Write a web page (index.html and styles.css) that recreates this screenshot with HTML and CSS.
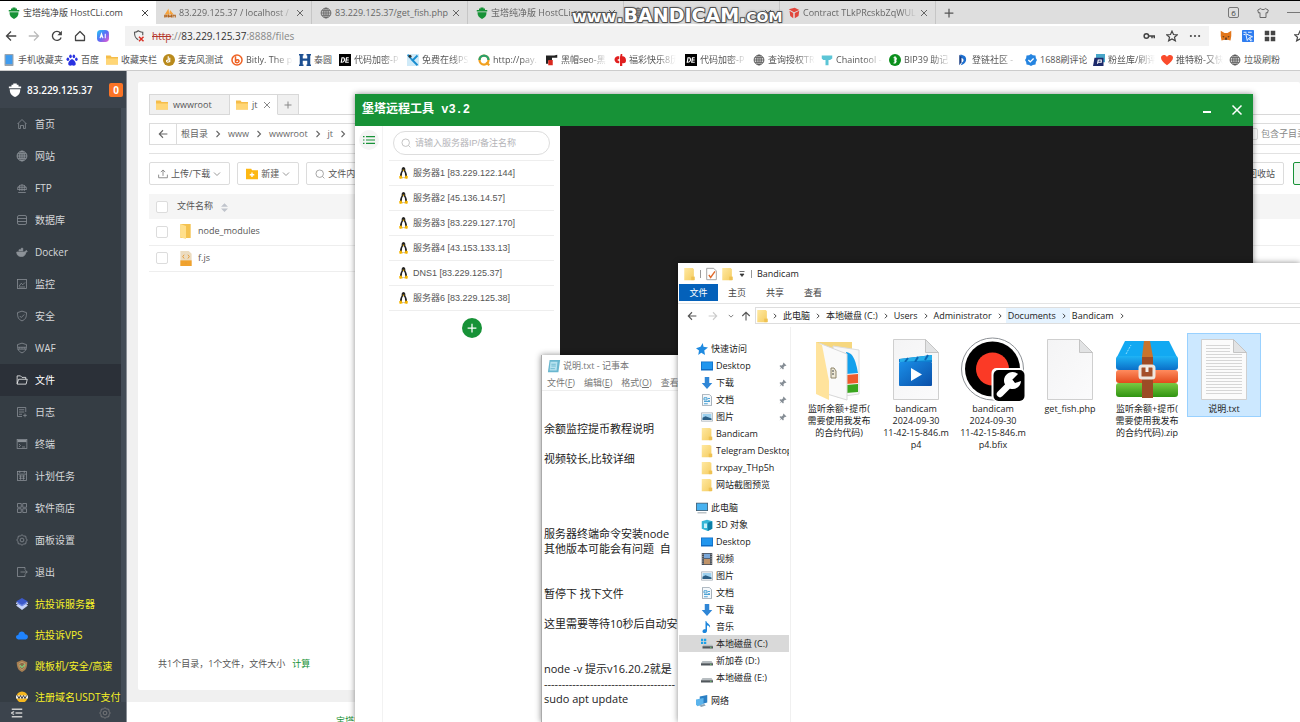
FILE: index.html
```html
<!DOCTYPE html>
<html lang="zh-CN">
<head>
	<meta charset="UTF-8">
	<title>宝塔纯净版 HostCLi.com</title>
	<link rel="stylesheet" href="styles.css">
</head>
<body>

<!-- icons -->
<svg class="defs" width="0" height="0">
	<defs>
		<linearGradient id="gFolder" x1="0" y1="0" x2="1" y2="1"><stop offset="0" stop-color="#ffe9a2"/><stop offset="1" stop-color="#f5cd62"/></linearGradient>
		<linearGradient id="gAi" x1="0" y1="0" x2="1" y2="1"><stop offset="0" stop-color="#22c8f5"/><stop offset=".5" stop-color="#5a6cf5"/><stop offset="1" stop-color="#f05ad0"/></linearGradient>
		<linearGradient id="gBlue" x1="0" y1="0" x2="0" y2="1"><stop offset="0" stop-color="#1fb4f5"/><stop offset="1" stop-color="#0a6fc8"/></linearGradient>
		<linearGradient id="gPlay" x1="0" y1="0" x2="1" y2="1"><stop offset="0" stop-color="#1a8fe8"/><stop offset="1" stop-color="#0a4fa8"/></linearGradient>
		<linearGradient id="gRed" x1="0" y1="0" x2="0" y2="1"><stop offset="0" stop-color="#ff8b5e"/><stop offset="1" stop-color="#e24a1c"/></linearGradient>
		<linearGradient id="gGreen" x1="0" y1="0" x2="0" y2="1"><stop offset="0" stop-color="#7ac943"/><stop offset="1" stop-color="#2f9412"/></linearGradient>
		<linearGradient id="gPaper" x1="0" y1="0" x2="1" y2="1"><stop offset="0" stop-color="#f4f4f5"/><stop offset="1" stop-color="#fbfbfc"/></linearGradient>
	</defs>
	<symbol id="bt" viewBox="0 0 16 16"><path d="M1 4h3V2h2V.500h4V2h2v2h3v2H1z"/><path d="M2 7h12c0 5-2 7-6 9-4-2-6-4-6-9z"/></symbol>
	<symbol id="pma" viewBox="0 0 16 16"><path d="M1 10 6 2l1 8zM7 10l1-6 5 6z" fill="#f6a23a"/><path d="M1 14v-3h3v2H1M6 14v-3l2 2 2-2v3M12 14v-3h3v3" fill="none" stroke="#b5651d" stroke-width="1.500"/></symbol>
	<symbol id="globe" viewBox="0 0 16 16"><g fill="none" stroke="currentColor" stroke-width="1.300"><circle cx="8" cy="8" r="6.500"/><ellipse cx="8" cy="8" rx="3" ry="6.500"/><path d="M8 1.500v13M1.500 8h13M2.500 5h11M2.500 11h11"/></g></symbol>
	<symbol id="cube" viewBox="0 0 16 16"><path d="M1 3l8-2 6 3-7 3zM2 5l5 3v7l-4-3zM9 8l6-3-1 7-5 3z" fill="#e2463c"/></symbol>
	<symbol id="x" viewBox="0 0 16 16"><path d="M2 2l12 12M14 2L2 14" fill="none" stroke="currentColor" stroke-width="2"/></symbol>
	<symbol id="plus" viewBox="0 0 16 16"><path d="M8 1v14M1 8h14" fill="none" stroke="currentColor" stroke-width="2"/></symbol>
	<symbol id="back" viewBox="0 0 16 16"><path d="M8 2L2 8l6 6M2 8h13" fill="none" stroke="currentColor" stroke-width="1.700"/></symbol>
	<symbol id="fwd" viewBox="0 0 16 16"><path d="M8 2l6 6-6 6M14 8H1" fill="none" stroke="currentColor" stroke-width="1.700"/></symbol>
	<symbol id="up" viewBox="0 0 16 16"><path d="M2 8l6-6 6 6M8 2v13" fill="none" stroke="currentColor" stroke-width="1.700"/></symbol>
	<symbol id="reload" viewBox="0 0 16 16"><path d="M13.500 10A6 6 0 1 1 12.500 4" fill="none" stroke="currentColor" stroke-width="1.800"/><path d="M14.500 1v6h-6z" fill="currentColor"/></symbol>
	<symbol id="home" viewBox="0 0 16 16"><path d="M2 8l6-6 6 6v6H2z" fill="none" stroke="currentColor" stroke-width="1.700" stroke-linejoin="round"/></symbol>
	<symbol id="ai" viewBox="0 0 16 16"><rect width="16" height="16" rx="5" fill="url(#gAi)"/><path d="M4 11l2-6 2 6M5 9h2.500M11 5v6" fill="none" stroke="#fff" stroke-width="1.400"/></symbol>
	<symbol id="unsafe" viewBox="0 0 16 16"><path d="M7 13C3 11 2 9 2 3c3 0 4-1 5-2 2 1 3 2 6 2v4" fill="none" stroke="#555" stroke-width="1.500"/><path d="M8 9l6 6M14 9l-6 6" stroke="#d93025" stroke-width="2"/></symbol>
	<symbol id="key" viewBox="0 0 16 16"><circle cx="4.500" cy="8" r="3" fill="none" stroke="#444" stroke-width="2"/><path d="M8 8h7v3M12 8v3" fill="none" stroke="#444" stroke-width="2"/></symbol>
	<symbol id="star" viewBox="0 0 16 16"><path d="M8 1.500l2 4.500 5 .500-3.700 3.200 1.200 4.800L8 12l-4.500 2.500 1.200-4.800L1 6.500 6 6z" fill="none" stroke="#444" stroke-width="1.600"/></symbol>
	<symbol id="dots" viewBox="0 0 16 16"><g fill="#444"><circle cx="2.500" cy="8" r="1.400"/><circle cx="8" cy="8" r="1.400"/><circle cx="13.500" cy="8" r="1.400"/></g></symbol>
	<symbol id="fox" viewBox="0 0 16 16"><path d="M1 1l5 3h4l5-3v7l-1 6-4-1H6l-4 1-1-6z" fill="#e2761b"/><path d="M6 13l2-4 2 4z" fill="#5a3a24"/><path d="M3 8l3 1-1 1zM13 8l-3 1 1 1z" fill="#222"/></symbol>
	<symbol id="sel" viewBox="0 0 16 16"><rect width="16" height="16" rx="1" fill="#2f7df0"/><path d="M5 5l9 4-4 1 3 4-1 1-3-4-2 3zM2 3h4M2 6h2M8 3h5" fill="none" stroke="#fff" stroke-width="1.200"/></symbol>
	<symbol id="apps" viewBox="0 0 16 16"><path d="M1 1h6v6H1zM9 1h6v6H9zM1 9h6v6H1zM9 9h6v6H9z" fill="#444"/></symbol>
	<symbol id="shirt" viewBox="0 0 16 16"><path d="M5 2l-4 2 1 4 2-.500V14h8V7.500l2 .500 1-4-4-2c-1 2-5 2-6 0z" fill="none" stroke="#666" stroke-width="1.300"/></symbol>
	<!-- bookmarks -->
	<symbol id="phone" viewBox="0 0 16 16"><rect x="2" y="0" width="12" height="16" rx="1" fill="#9aa4ae"/><rect x="3.500" y="1.500" width="9" height="12" fill="#3f9cf0"/></symbol>
	<symbol id="paw" viewBox="0 0 16 16"><g fill="#2932e1"><ellipse cx="2.500" cy="7" rx="1.800" ry="2.200"/><ellipse cx="6" cy="3" rx="1.700" ry="2.500"/><ellipse cx="10.500" cy="3" rx="1.700" ry="2.500"/><ellipse cx="13.800" cy="7" rx="1.700" ry="2.200"/><path d="M8 7c2 0 5 3.500 5 6 0 3-3 3-5 2-2 1-5 1-5-2 0-2.500 3-6 5-6z"/></g></symbol>
	<symbol id="folder" viewBox="0 0 16 16"><path d="M0 2h6l1.500 2H16v10H0z" fill="#f5bd4a"/><path d="M0 6h16v8H0z" fill="#ffd676"/></symbol>
	<symbol id="coin" viewBox="0 0 16 16"><circle cx="8" cy="8" r="8" fill="#b98a1c"/><path d="M7 3v5c-3 0-3 2-1 3l3-1V5" fill="none" stroke="#fff" stroke-width="1.500"/></symbol>
	<symbol id="bitly" viewBox="0 0 16 16"><circle cx="8" cy="8" r="6.700" fill="none" stroke="#ee6123" stroke-width="2"/><path d="M6 3v8c3 2 6-1 4-3-2-1-3 0-4 2" fill="none" stroke="#ee6123" stroke-width="2"/></symbol>
	<symbol id="hh" viewBox="0 0 16 16"><path d="M0 0h6v2H5v4h6V2h-1V0h6v2h-1v12h1v2h-6v-2h1V9H5v5h1v2H0v-2h1V2H0z" fill="#1d4f91"/></symbol>
	<symbol id="de" viewBox="0 0 16 16"><path d="M0 0h16v16H0z"/><path d="M3 11l1-6h2q2 1 1 4-1 2-3 2zM13 5h-3l-1 6h4M10 8h3" fill="none" stroke="#fff" stroke-width="1.600"/></symbol>
	<symbol id="ps" viewBox="0 0 16 16"><path d="M0 0h16v16H0z" fill="#cfeaf8"/><path d="M1 1l5 6M6 7l8 8M14 2L8 8" stroke="#1a8ed0" stroke-width="2.500"/><circle cx="4" cy="3" r="2" fill="#333"/></symbol>
	<symbol id="q" viewBox="0 0 16 16"><circle cx="8" cy="8" r="6" fill="none" stroke="#f2a01e" stroke-width="3"/><path d="M2 8a6 6 0 0 1 12 0" fill="none" stroke="#29a06b" stroke-width="3"/><path d="M11 11l4 4" stroke="#f2a01e" stroke-width="3"/></symbol>
	<symbol id="hat" viewBox="0 0 16 16"><path d="M0 2h11l4-1v4H8v4H3v4H0z" fill="#222"/><path d="M3 8h6v7H3z" fill="#d8281e"/></symbol>
	<symbol id="cp" viewBox="0 0 16 16"><path d="M7 3C2 2 0 6 1 9s4 4 6 3V9H5V7h2zM9 0h2v3c4 0 5 3 5 6s-3 4-5 3v4H8V4z" fill="#e01f1f"/></symbol>
	<symbol id="chain" viewBox="0 0 16 16"><path d="M1 2h14v4l-3 2h-2v7H6V8H3L1 6z" fill="#5cc5d6"/></symbol>
	<symbol id="bip" viewBox="0 0 16 16"><circle cx="8" cy="8" r="8" fill="#0b8f1c"/><path d="M8 3v9M6 5h3q2 2-1 3 3 1 0 4H6" fill="none" stroke="#fff" stroke-width="1.500"/></symbol>
	<symbol id="deng" viewBox="0 0 16 16"><path d="M4 1c6 0 9 3 8 8-1 3-3 5-7 6l2-4c3-2 2-5-2-6z" fill="#1c6fd0"/><path d="M3 1l3 3v7l-3 4z" fill="#1a3f86"/></symbol>
	<symbol id="ok" viewBox="0 0 16 16"><path d="M8 0l2.500 1.500L14 2l.500 3.500L16 8l-1.500 2.500L14 14l-3.500.500L8 16l-2.500-1.500L2 14l-.500-3.500L0 8l1.500-2.500L2 2l3.500-.500z" fill="#2584e0"/><path d="M4.500 8l2.500 2.500L11.500 6" fill="none" stroke="#fff" stroke-width="1.800"/></symbol>
	<symbol id="pf" viewBox="0 0 16 16"><path d="M4 0h12v11H4z" fill="#48a6c9"/><path d="M2 5h12v11H0z" fill="#1d2a6b"/><path d="M6 13l1-5h4v3H7" fill="none" stroke="#fff" stroke-width="1.500"/></symbol>
	<symbol id="heart" viewBox="0 0 16 16"><path d="M8 15C3 11 0 8 0 5c0-4 6-5 8-1 2-4 8-3 8 1 0 3-3 6-8 10z" fill="#fa4b2c"/></symbol>
	<!-- panel menu -->
	<symbol id="mHome" viewBox="0 0 16 16"><path d="M2 8l6-6 6 6M3.500 7v7H6v-4h4v4h2.500V7" /></symbol>
	<symbol id="mFtp" viewBox="0 0 16 16"><path d="M2 10a6 6 0 1 1 12 0M8 3v9M2 7h12M2 10h12M5 4v8M11 4v8M3 14h10"/></symbol>
	<symbol id="mDb" viewBox="0 0 16 16"><rect x="2" y="2" width="12" height="12" rx="2"/><path d="M2 6h12M2 10h12"/></symbol>
	<symbol id="mDocker" viewBox="0 0 16 16"><path d="M1 8h10l3-2 1 1-2 2c-1 4-3 5-6 5-4 0-6-2-6-6zM4 7V5h5v2M7 5V3h2v2" fill="currentColor"/></symbol>
	<symbol id="mMon" viewBox="0 0 16 16"><rect x="2" y="2" width="12" height="12"/><path d="M4 11l3-4 2 2 3-3M4 12h8"/></symbol>
	<symbol id="mSafe" viewBox="0 0 16 16"><path d="M8 1.500l6 2c0 6-1 9-6 11-5-2-6-5-6-11zM5 8l2 2 4-4"/></symbol>
	<symbol id="mWaf" viewBox="0 0 16 16"><path d="M8 1.500l6 2c0 6-1 9-6 11-5-2-6-5-6-11zM2 7h12M2 9.500h12M5 7v2M8 7v2M11 7v2"/></symbol>
	<symbol id="mFile" viewBox="0 0 16 16"><path d="M1.500 13V2.500H6l2 2h5V7M1.500 13l2-6H15l-1.500 6.500h-12z"/></symbol>
	<symbol id="mLog" viewBox="0 0 16 16"><path d="M8 14H2V2h11v6M4 5h7M4 8h7M4 11h4M12 10v5M9.500 12.500h5"/></symbol>
	<symbol id="mTerm" viewBox="0 0 16 16"><rect x="1.500" y="2" width="13" height="12"/><path d="M2 4h12" stroke-width="3"/><path d="M4 8l2 2-2 2M8 12h4"/></symbol>
	<symbol id="mCron" viewBox="0 0 16 16"><rect x="2" y="2" width="12" height="12"/><path d="M2 5.500h12M5 1v3M11 1v3M4 8h8M4 11h8M6 7v6M10 7v6"/></symbol>
	<symbol id="mSoft" viewBox="0 0 16 16"><path d="M2 2h5v5H2zM9 2h5v5H9zM2 9h5v5H2zM9 9h5v5H9z"/></symbol>
	<symbol id="mSet" viewBox="0 0 16 16"><path d="M8 1l2 1.500 3 .500.500 3L15 8l-1.500 2-.500 3-3 .500L8 15l-2-1.500-3-.500-.500-3L1 8l1.500-2L3 3l3-.500z"/><circle cx="8" cy="8" r="2.500"/></symbol>
	<symbol id="mExit" viewBox="0 0 16 16"><path d="M12 5V2H2v12h10v-3M6 8h9M12.500 5.500L15 8l-2.500 2.500"/></symbol>
	<symbol id="mServer" viewBox="0 0 16 16"><path d="M8 6l8 4-8 6-8-6z" fill="#c6d2f7" stroke="none"/><path d="M8 3l8 4-8 5-8-5z" fill="#6f8ae6" stroke="#dfe6ff"/><path d="M8 0l8 4.500L8 9 0 4.500z" fill="#3c59c9" stroke="none"/></symbol>
	<symbol id="mCloud" viewBox="0 0 16 16"><path d="M3 14c-4-1-4-6 0-6 1-6 8-6 9-1 5 0 5 6 1 7z" fill="#1f84ff" stroke="none"/></symbol>
	<symbol id="mJump" viewBox="0 0 16 16"><path d="M8 0l7 3c0 7-2 11-7 13C3 14 1 10 1 3z" fill="#a77f52" stroke="none"/><path d="M8 3l4 2c0 4-1 6-4 8-3-2-4-4-4-8z" fill="#8c6a48" stroke="#c7a376"/><path d="M5 7l3 3 4-4" stroke="#7ed07e" stroke-width="1.500"/></symbol>
	<symbol id="mUsdt" viewBox="0 0 16 16"><circle cx="8" cy="8" r="7.500" fill="#f5b71f" stroke="none"/><path d="M0 6h16v4H0z" fill="#eee" stroke="none"/><path d="M2 6l2 4 2-4 2 4 2-4 2 4 2-4" stroke="#444" stroke-width="1.300"/></symbol>
	<symbol id="mFold" viewBox="0 0 16 16"><path d="M1 3h14M6 8h9M4 6L1 8l3 2M1 13h14" stroke-width="2"/></symbol>
	<!-- file manager -->
	<symbol id="chev" viewBox="0 0 8 8"><path d="M2.500 1L5.500 4l-3 3" fill="none" stroke="currentColor" stroke-width="1.100"/></symbol>
	<symbol id="down" viewBox="0 0 8 8"><path d="M1 2.500L4 5.500l3-3" fill="none" stroke="currentColor" stroke-width="1"/></symbol>
	<symbol id="caret" viewBox="0 0 8 8"><path d="M1.500 1.500h5M2 4h4L4 6.500z" fill="#333" stroke="#333" stroke-width=".7"/></symbol>
	<symbol id="upload" viewBox="0 0 16 16"><path d="M1 9v5h14V9M8 11V2M4.500 5L8 1.500 11.500 5" fill="none" stroke="#777" stroke-width="1.300"/></symbol>
	<symbol id="newf" viewBox="0 0 16 16"><path d="M0 1h7l1 2h8v12H0z" fill="#fdb813"/><path d="M8 6v6M5 9h6" stroke="#fff" stroke-width="1.800"/></symbol>
	<symbol id="search" viewBox="0 0 16 16"><circle cx="7.500" cy="7.500" r="6" fill="none" stroke="currentColor" stroke-width="1.400"/><path d="M12 12l3 3" stroke="currentColor" stroke-width="1.400"/></symbol>
	<symbol id="sort" viewBox="0 0 8 12"><path d="M4 1l4 4H0zM0 7h8l-4 4z" fill="#c0c4cc"/></symbol>
	<symbol id="dir" viewBox="0 0 12 16"><path d="M0 0h11v15H0z" fill="#f4c24f"/><path d="M0 0l6 2v14l-6-2z" fill="#ffdf8b"/></symbol>
	<symbol id="jsfile" viewBox="0 0 12 16"><path d="M0 0h9l3 3v13H0z" fill="#ecdcc0"/><path d="M0 10h12v6H0z" fill="#f0a22e"/><path d="M4 4L2.500 6 4 8M8 4l1.500 2L8 8M5 13h2" fill="none" stroke="#e59a38"/></symbol>
	<!-- remote tool -->
	<symbol id="menu" viewBox="0 0 16 12"><path d="M4 1.500h12M4 6h12M4 10.500h12M0 1.500h2M0 6h2M0 10.500h2" stroke="#179237" stroke-width="1.400"/></symbol>
	<symbol id="tux" viewBox="0 0 12 16"><path d="M6 0c2.500 0 2.500 3 2.500 5 2 3 2.500 6 2 9h-9c-.500-3 0-6 2-9 0-2 0-5 2.500-5z" fill="#222"/><path d="M6 5c2 2 2.500 5 2 9H4c-.500-4 0-7 2-9z" fill="#fff"/><path d="M4.500 3.500h3L6 5.500z" fill="#f7b500"/><path d="M0 12.500l3-1.500 2 4-4 1zM12 12.500L9 11l-2 4 4 1z" fill="#f7b500"/></symbol>
	<!-- explorer -->
	<symbol id="wfolder" viewBox="0 0 12 16"><path d="M0 1h10v1h1v13H0z" fill="url(#gFolder)"/><path d="M8 11h4v4H8z" fill="#eec152"/></symbol>
	<symbol id="check" viewBox="0 0 12 16"><path d="M.500 1.500h8l3 3v10H.500z" fill="#fff" stroke="#999"/><path d="M3 9l2 3 5-7" fill="none" stroke="#e06a2c" stroke-width="1.600"/></symbol>
	<symbol id="qstar" viewBox="0 0 16 16"><path d="M9 0l1 5 6 1-5 4 1 6-5-3-4 3 1-6-4-3 6-2z" fill="#1f8ae0"/></symbol>
	<symbol id="desk" viewBox="0 0 16 16"><path d="M0 2h16v12H0z" fill="#0f6cc4"/><path d="M1 3h14v9H1z" fill="#2196ee"/></symbol>
	<symbol id="dl" viewBox="0 0 16 16"><path d="M5 0h6v8h4l-7 8-7-8h4z" fill="#2f86d6"/></symbol>
	<symbol id="doc" viewBox="0 0 16 16"><path d="M2 .500h9l3 3v12H2z" fill="#f4f8fb" stroke="#8b98a4"/><path d="M4 5h4v3H4zM9 6h3M9 9h3M4 10h8M4 13h5" fill="none" stroke="#3c9ad0" stroke-width="1.200"/></symbol>
	<symbol id="pic" viewBox="0 0 16 16"><path d="M.500 2.500h15v11H.500z" fill="#fff" stroke="#9aa4ad"/><path d="M2 4h12v8H2z" fill="#9dd0ee"/><path d="M2 9l4-2 8 3v2H2z" fill="#2c5f85"/></symbol>
	<symbol id="pc" viewBox="0 0 16 16"><path d="M0 1h16v11H0z" fill="#4b5b68"/><path d="M1 2h14v9H1z" fill="#48b2f0"/><path d="M2 14h12v1H2z" fill="#7d8890"/></symbol>
	<symbol id="cube3" viewBox="0 0 16 16"><path d="M1 3l7-2 7 2v10l-6 3-8-3z" fill="#35b6d6"/><path d="M9 5l6-2v10l-6 3z" fill="#0e7fa8"/><path d="M4 6h4v6H4z" fill="#c5f0fa"/></symbol>
	<symbol id="film" viewBox="0 0 16 16"><path d="M1 0h14v16H1z" fill="#454c55"/><path d="M4 1h8v6H4z" fill="#7aa7d8"/><path d="M4 8h8v7H4z" fill="#c09368"/><path d="M2.500 1v14M13.500 1v14" stroke="#ddd" stroke-dasharray="1.500"/></symbol>
	<symbol id="note" viewBox="0 0 16 16"><path d="M7 0c1 4 6 4 5 9-1-3-3-3-4-3v7c0 4-6 4-6 1s3-3 4-3V0z" fill="#1d86dc"/></symbol>
	<symbol id="diskc" viewBox="0 0 16 16"><path d="M0 1h3v3H0zM4 1h3v3H4zM0 5h3v3H0zM4 5h3v3H4z" fill="#1ea1e8"/><path d="M3 9h12l1 2H2z" fill="#b7bdc1"/><path d="M2 11h14v3H2z" fill="#50575c"/><path d="M12 12.500h2" stroke="#6be06b"/></symbol>
	<symbol id="disk" viewBox="0 0 16 16"><path d="M2 8h12l2 3H0z" fill="#b7bdc1"/><path d="M0 11h16v3H0z" fill="#50575c"/><path d="M12 12.500h2" stroke="#6be06b"/></symbol>
	<symbol id="net" viewBox="0 0 16 16"><path d="M5 2l10-2v10l-10 3z" fill="#2b7fc4"/><path d="M0 6l10-2v8l-8 3-2-2z" fill="#5cb4ec"/><path d="M4 14l7-2 2 2-6 2z" fill="#8aa6ba"/></symbol>
	<symbol id="pin" viewBox="0 0 16 16"><path d="M9 1l6 6-2 1-1-.500-3 3 .500 3L8 15l-3-3-4 3 3-4-3-3 1.500-1.500 3 .500 3-3L8 3z" fill="#858d95"/></symbol>
	<symbol id="npad" viewBox="0 0 16 16"><path d="M3 1h12l-2 14H1z" fill="#6ab7cf"/><path d="M4 3h8l-1 10H3z" fill="#b5e2ef"/><path d="M5 6h5M5 8h5M4 11h5" stroke="#6ab7cf"/></symbol>
	<symbol id="bigFolder" viewBox="0 0 64 64"><path d="M9 5h36v50H9z" fill="#f6d77f"/><path d="M26 9l26 4v44l-22 3z" fill="#f7f7f7" stroke="#dcdcdc"/><path d="M39 15c6 1 9 5 12 21l-12 1z" fill="#13a0ec"/><path d="M39 38l12-1v9l-12 1z" fill="#ee5a2c"/><path d="M39 48l12-1v8l-12 1z" fill="#3aa61e"/><path d="M12 6l28 11v46L20 57z" fill="#fafafa" stroke="#d8d8d8"/><path d="M9 5l6 3 7 36v19L9 57z" fill="#ffe39c"/><path d="M24 31h3l2 3v7h-5z" fill="#efead9" stroke="#8c8368"/><path d="M25 34h2M25 37h2" stroke="#444"/></symbol>
	<symbol id="video" viewBox="0 0 64 64"><path d="M9.500 2.500h32l13 13v47h-45z" fill="url(#gPaper)" stroke="#cfcfcf"/><path d="M41.500 2.500v13h13z" fill="#e2e3e4" stroke="#c4c4c4"/><path d="M15 22l33-4v7H15z" fill="#0e7fd0"/><path d="M16 22l32-4v5l-32 2z" fill="#27aeea"/><path d="M24 21l-3 4M34 20l-3 5M44 18l-3 5" stroke="#0b66b4" stroke-width="2"/><rect x="15" y="25" width="33" height="24" rx="1" fill="url(#gPlay)"/><path d="M27 31v13l11-6.500z" fill="#fff"/></symbol>
	<symbol id="rec" viewBox="0 0 64 64"><circle cx="31.500" cy="32" r="31" fill="#fff" stroke="#8d9196"/><circle cx="31.500" cy="32" r="27.500"/><circle cx="31.500" cy="32" r="16.500" fill="#fb3a26"/><rect x="30.500" y="31" width="33" height="33" rx="5" fill="#fff"/><rect x="32.500" y="33" width="31" height="31" rx="5"/><path d="M39 57l11-11" stroke="#fff" stroke-width="6.500" stroke-linecap="round"/><path d="M57 37a8.500 8.500 0 1 0 3 7l-6 2-3-3z" fill="#fff"/></symbol>
	<symbol id="paper" viewBox="0 0 64 64"><path d="M9.500 2.500h32l13 13v47h-45z" fill="url(#gPaper)" stroke="#cfcfcf"/><path d="M41.500 2.500v13h13z" fill="#e2e3e4" stroke="#c4c4c4"/></symbol>
	<symbol id="zip" viewBox="0 0 64 64"><path d="M10 4h44l8 16H2z" fill="#12a9f2"/><rect x="1" y="19" width="62" height="14" rx="3" fill="url(#gBlue)"/><rect x="1" y="33" width="62" height="13" rx="3" fill="url(#gRed)"/><rect x="1" y="46" width="62" height="14" rx="3" fill="url(#gGreen)"/><path d="M29 4h6l3 16H27z" fill="#c9742c"/><path d="M27 20h11v41H27z" fill="#9c4c26"/><path d="M11 17l5-9" stroke="#8fe0ff" stroke-dasharray="2 1"/><rect x="25" y="29" width="14" height="12" rx="2" fill="#a4502a" stroke="#eee7e0" stroke-width="3"/><path d="M32 30v5" stroke="#f2eee9" stroke-width="3"/></symbol>
	<symbol id="txt" viewBox="0 0 64 64"><path d="M9.500 2.500h32l13 13v47h-45z" fill="#fbfbfb" stroke="#cfcfcf"/><path d="M14 8.500h24M14 11.500h24M14 14.500h24M14 17.500h36M14 20.500h36M14 23.500h36M14 26.500h36M14 29.500h36M14 32.500h36M14 35.500h36M14 38.500h36M14 41.500h36M14 44.500h36M14 47.500h36M14 50.500h36M14 53.500h36M14 56.500h36" stroke="#d6d6d6"/><path d="M41.500 2.500v13h13z" fill="#e2e3e4" stroke="#c4c4c4"/></symbol>
</svg>

<div class="browser">
	<div class="tabs">
		<div class="tab on"><svg class="i12 green"><use href="#bt"/></svg><span>宝塔纯净版 HostCLi.com</span><button aria-label="关闭"><svg class="i8"><use href="#x"/></svg></button></div>
		<div class="tab"><svg class="i12"><use href="#pma"/></svg><span>83.229.125.37 / localhost /</span><button aria-label="关闭"><svg class="i8"><use href="#x"/></svg></button></div>
		<div class="tab"><svg class="i12"><use href="#globe"/></svg><span class="full">83.229.125.37/get_fish.php</span><button aria-label="关闭"><svg class="i8"><use href="#x"/></svg></button></div>
		<div class="tab"><svg class="i12 green"><use href="#bt"/></svg><span>宝塔纯净版 HostCLi.com</span><button aria-label="关闭"><svg class="i8"><use href="#x"/></svg></button></div>
		<div class="tab"><svg class="i12"><use href="#globe"/></svg><span></span><button aria-label="关闭"><svg class="i8"><use href="#x"/></svg></button></div>
		<div class="tab"><svg class="i12"><use href="#cube"/></svg><span>Contract TLkPRcskbZqWUL</span><button aria-label="关闭"><svg class="i8"><use href="#x"/></svg></button></div>
		<button class="newTab" aria-label="新标签页"><svg class="i10"><use href="#plus"/></svg></button>
		<div class="winBtns">
			<span class="count">6</span>
			<svg class="i12"><use href="#shirt"/></svg>
			<button class="min" aria-label="最小化"></button>
		</div>
	</div>

	<div class="bar">
		<button aria-label="后退"><svg class="i12"><use href="#back"/></svg></button>
		<button class="off" aria-label="前进"><svg class="i12"><use href="#fwd"/></svg></button>
		<button aria-label="刷新"><svg class="i12"><use href="#reload"/></svg></button>
		<button aria-label="主页"><svg class="i12"><use href="#home"/></svg></button>
		<button aria-label="AI"><svg class="i12"><use href="#ai"/></svg></button>
		<div class="url">
			<svg class="i12"><use href="#unsafe"/></svg>
			<p><del>http</del>://<b>83.229.125.37</b>:8888/files</p>
			<svg class="i12"><use href="#key"/></svg>
			<svg class="i12"><use href="#star"/></svg>
			<svg class="i12"><use href="#dots"/></svg>
		</div>
		<div class="ext">
			<svg class="i12"><use href="#fox"/></svg>
			<svg class="i12"><use href="#sel"/></svg>
			<svg class="i12"><use href="#apps"/></svg>
			<svg class="i12 cut"><use href="#star"/></svg>
		</div>
	</div>

	<nav class="marks">
		<a href="#" class="w63"><svg class="i12"><use href="#phone"/></svg><span>手机收藏夹</span></a>
		<a href="#" class="w40"><svg class="i12"><use href="#paw"/></svg><span>百度</span></a>
		<a href="#" class="w57"><svg class="i12"><use href="#folder"/></svg><span>收藏夹栏</span></a>
		<a href="#"><svg class="i12"><use href="#coin"/></svg><span>麦克风测试</span></a>
		<a href="#"><svg class="i12"><use href="#bitly"/></svg><span class="fade">Bitly. The p</span></a>
		<a href="#" class="w40"><svg class="i12"><use href="#hh"/></svg><span>泰圆</span></a>
		<a href="#"><svg class="i12"><use href="#de"/></svg><span class="fade">代码加密-P</span></a>
		<a href="#" class="w71"><svg class="i12"><use href="#ps"/></svg><span class="fade">免费在线PS_</span></a>
		<a href="#"><svg class="i12"><use href="#q"/></svg><span class="fade">http://pay.</span></a>
		<a href="#"><svg class="i12"><use href="#hat"/></svg><span class="fade">黑帽seo-黑</span></a>
		<a href="#" class="w71"><svg class="i12"><use href="#cp"/></svg><span class="fade">福彩快乐8历</span></a>
		<a href="#"><svg class="i12"><use href="#de"/></svg><span class="fade">代码加密-P</span></a>
		<a href="#"><svg class="i12"><use href="#globe"/></svg><span class="fade">查询授权TR</span></a>
		<a href="#"><svg class="i12"><use href="#chain"/></svg><span class="fade">Chaintool -</span></a>
		<a href="#"><svg class="i12"><use href="#bip"/></svg><span class="fade">BIP39 助记</span></a>
		<a href="#"><svg class="i12"><use href="#deng"/></svg><span class="fade">登链社区 -</span></a>
		<a href="#"><svg class="i12"><use href="#ok"/></svg><span>1688刷评论</span></a>
		<a href="#"><svg class="i12"><use href="#pf"/></svg><span class="fade">粉丝库/刷评</span></a>
		<a href="#"><svg class="i12"><use href="#heart"/></svg><span class="fade">推特粉-又快</span></a>
		<a href="#"><svg class="i12"><use href="#globe"/></svg><span>垃圾刷粉</span></a>
	</nav>

	<div class="panel">
		<aside class="side">
			<div class="host"><svg class="i14"><use href="#bt"/></svg><b>83.229.125.37</b><em>0</em></div>
			<ul class="menu">
				<li><a href="#"><svg class="i12"><use href="#mHome"/></svg>首页</a></li>
				<li><a href="#"><svg class="i12"><use href="#globe"/></svg>网站</a></li>
				<li><a href="#"><svg class="i12"><use href="#mFtp"/></svg>FTP</a></li>
				<li><a href="#"><svg class="i12"><use href="#mDb"/></svg>数据库</a></li>
				<li><a href="#"><svg class="i12"><use href="#mDocker"/></svg>Docker</a></li>
				<li><a href="#"><svg class="i12"><use href="#mMon"/></svg>监控</a></li>
				<li><a href="#"><svg class="i12"><use href="#mSafe"/></svg>安全</a></li>
				<li><a href="#"><svg class="i12"><use href="#mWaf"/></svg>WAF</a></li>
				<li><a href="#" class="on"><svg class="i12"><use href="#mFile"/></svg>文件</a></li>
				<li><a href="#"><svg class="i12"><use href="#mLog"/></svg>日志</a></li>
				<li><a href="#"><svg class="i12"><use href="#mTerm"/></svg>终端</a></li>
				<li><a href="#"><svg class="i12"><use href="#mCron"/></svg>计划任务</a></li>
				<li><a href="#"><svg class="i12"><use href="#mSoft"/></svg>软件商店</a></li>
				<li><a href="#"><svg class="i12"><use href="#mSet"/></svg>面板设置</a></li>
				<li><a href="#"><svg class="i12"><use href="#mExit"/></svg>退出</a></li>
				<li><a href="#" class="ad"><svg class="i12"><use href="#mServer"/></svg>抗投诉服务器</a></li>
				<li><a href="#" class="ad"><svg class="i12"><use href="#mCloud"/></svg>抗投诉VPS</a></li>
				<li><a href="#" class="ad"><svg class="i12"><use href="#mJump"/></svg>跳板机/安全/高速</a></li>
				<li><a href="#" class="ad"><svg class="i12"><use href="#mUsdt"/></svg>注册域名USDT支付</a></li>
			</ul>
			<div class="sideFoot"><svg class="i12"><use href="#mFold"/></svg><svg class="i12 dim"><use href="#mSet"/></svg></div>
		</aside>

		<main class="main">
			<section class="card">
				<div class="ftabs">
					<a href="#" class="ftab"><svg class="i12"><use href="#folder"/></svg>wwwroot</a>
					<a href="#" class="ftab on"><svg class="i12"><use href="#folder"/></svg>jt<svg class="i8"><use href="#x"/></svg></a>
					<button aria-label="新建标签"><svg class="i8"><use href="#plus"/></svg></button>
				</div>
				<div class="path">
					<button aria-label="返回"><svg class="i10"><use href="#back"/></svg></button>
					<a href="#">根目录</a><svg class="i8"><use href="#chev"/></svg>
					<a href="#">www</a><svg class="i8"><use href="#chev"/></svg>
					<a href="#">wwwroot</a><svg class="i8"><use href="#chev"/></svg>
					<a href="#">jt</a><svg class="i8"><use href="#chev"/></svg>
					<label><input type="checkbox">包含子目录</label>
				</div>
				<div class="tools">
					<button><svg class="i10"><use href="#upload"/></svg>上传/下载<svg class="i8"><use href="#down"/></svg></button>
					<button><svg class="i12"><use href="#newf"/></svg>新建<svg class="i8"><use href="#down"/></svg></button>
					<button><svg class="i10"><use href="#search"/></svg>文件内容搜索</button>
					<button class="bin">回收站</button>
					<button class="view" aria-label="列表"></button>
				</div>
				<table class="files">
					<thead>
						<tr><th class="ck"><input type="checkbox" aria-label="全选"></th><th>文件名称<svg class="sort"><use href="#sort"/></svg></th></tr>
					</thead>
					<tbody>
						<tr><td class="ck"><input type="checkbox" aria-label="node_modules"></td><td><svg class="fi"><use href="#dir"/></svg>node_modules</td></tr>
						<tr><td class="ck"><input type="checkbox" aria-label="f.js"></td><td><svg class="fi"><use href="#jsfile"/></svg>f.js</td></tr>
					</tbody>
				</table>
				<p class="sum">共1个目录，1个文件，文件大小<a href="#">计算</a></p>
			</section>
			<footer class="foot"><a href="#">宝塔Linux面板</a></footer>
		</main>
	</div>
</div>

<!-- remote tool -->
<section class="win remote">
	<header><h2>堡塔远程工具 v3.2</h2><button class="min" aria-label="最小化"></button><button aria-label="关闭"><svg class="i14"><use href="#x"/></svg></button></header>
	<div class="rbody">
		<div class="rail"><button aria-label="列表"><svg class="i12"><use href="#menu"/></svg></button></div>
		<div class="servers">
			<label class="find"><svg class="i10"><use href="#search"/></svg><input type="text" placeholder="请输入服务器IP/备注名称" aria-label="搜索"></label>
			<ul>
				<li><svg class="tux"><use href="#tux"/></svg>服务器1 [83.229.122.144]</li>
				<li><svg class="tux"><use href="#tux"/></svg>服务器2 [45.136.14.57]</li>
				<li><svg class="tux"><use href="#tux"/></svg>服务器3 [83.229.127.170]</li>
				<li><svg class="tux"><use href="#tux"/></svg>服务器4 [43.153.133.13]</li>
				<li><svg class="tux"><use href="#tux"/></svg>DNS1 [83.229.125.37]</li>
				<li><svg class="tux"><use href="#tux"/></svg>服务器6 [83.229.125.38]</li>
			</ul>
			<button class="add" aria-label="添加"><svg class="i10"><use href="#plus"/></svg></button>
		</div>
		<div class="term"></div>
	</div>
</section>

<!-- notepad -->
<section class="win notepad">
	<header><svg class="i14"><use href="#npad"/></svg>说明.txt - 记事本</header>
	<nav><a href="#">文件(<u>F</u>)</a><a href="#">编辑(<u>E</u>)</a><a href="#">格式(<u>O</u>)</a><a href="#">查看(<u>V</u>)</a></nav>
	<textarea wrap="off" aria-label="说明.txt">


余额监控提币教程说明

视频较长,比较详细




服务器终端命令安装node
其他版本可能会有问题  自


暂停下 找下文件

这里需要等待10秒后自动安


node -v 提示v16.20.2就是
-------------------------------------
sudo apt update
</textarea>
</section>

<!-- explorer -->
<section class="win explorer">
	<header><svg class="wf"><use href="#wfolder"/></svg><i></i><svg class="wf"><use href="#check"/></svg><svg class="wf"><use href="#wfolder"/></svg><svg class="i8"><use href="#caret"/></svg><i></i><span>Bandicam</span></header>
	<nav class="ribbon"><button class="on">文件</button><button>主页</button><button>共享</button><button>查看</button></nav>
	<div class="addr">
		<button aria-label="后退"><svg class="i10"><use href="#back"/></svg></button>
		<button class="off" aria-label="前进"><svg class="i10"><use href="#fwd"/></svg></button>
		<button class="small" aria-label="历史"><svg class="i6"><use href="#down"/></svg></button>
		<button class="small" aria-label="上移"><svg class="i10"><use href="#up"/></svg></button>
		<div class="crumbs">
			<svg class="wf"><use href="#wfolder"/></svg><svg class="i6 first"><use href="#chev"/></svg>
			<a href="#">此电脑<svg class="i6"><use href="#chev"/></svg></a>
			<a href="#">本地磁盘 (C:)<svg class="i6"><use href="#chev"/></svg></a>
			<a href="#">Users<svg class="i6"><use href="#chev"/></svg></a>
			<a href="#">Administrator<svg class="i6"><use href="#chev"/></svg></a>
			<a href="#" class="on">Documents<svg class="i6"><use href="#chev"/></svg></a>
			<a href="#">Bandicam<svg class="i6"><use href="#chev"/></svg></a>
		</div>
	</div>
	<div class="ebody">
		<ul class="tree">
			<li class="top"><svg class="i12"><use href="#qstar"/></svg><span>快速访问</span></li>
			<li><svg class="i12"><use href="#desk"/></svg><span>Desktop</span><svg class="i8"><use href="#pin"/></svg></li>
			<li><svg class="i12"><use href="#dl"/></svg><span>下载</span><svg class="i8"><use href="#pin"/></svg></li>
			<li><svg class="i12"><use href="#doc"/></svg><span>文档</span><svg class="i8"><use href="#pin"/></svg></li>
			<li><svg class="i12"><use href="#pic"/></svg><span>图片</span><svg class="i8"><use href="#pin"/></svg></li>
			<li><svg class="tf"><use href="#wfolder"/></svg><span>Bandicam</span></li>
			<li><svg class="tf"><use href="#wfolder"/></svg><span>Telegram Desktop</span></li>
			<li><svg class="tf"><use href="#wfolder"/></svg><span>trxpay_THp5h</span></li>
			<li><svg class="tf"><use href="#wfolder"/></svg><span>网站截图预览</span></li>
			<li class="top"><svg class="i12"><use href="#pc"/></svg><span>此电脑</span></li>
			<li><svg class="i12"><use href="#cube3"/></svg><span>3D 对象</span></li>
			<li><svg class="i12"><use href="#desk"/></svg><span>Desktop</span></li>
			<li><svg class="i12"><use href="#film"/></svg><span>视频</span></li>
			<li><svg class="i12"><use href="#pic"/></svg><span>图片</span></li>
			<li><svg class="i12"><use href="#doc"/></svg><span>文档</span></li>
			<li><svg class="i12"><use href="#dl"/></svg><span>下载</span></li>
			<li><svg class="i12"><use href="#note"/></svg><span>音乐</span></li>
			<li class="on"><svg class="i12"><use href="#diskc"/></svg><span>本地磁盘 (C:)</span></li>
			<li><svg class="i12"><use href="#disk"/></svg><span>新加卷 (D:)</span></li>
			<li><svg class="i12"><use href="#disk"/></svg><span>本地磁盘 (E:)</span></li>
			<li class="top"><svg class="i12"><use href="#net"/></svg><span>网络</span></li>
		</ul>
		<ul class="icons">
			<li><svg><use href="#bigFolder"/></svg><p>监听余额+提币(<br>需要使用我发布<br>的合约代码)</p></li>
			<li><svg><use href="#video"/></svg><p>bandicam<br>2024-09-30<br>11-42-15-846.m<br>p4</p></li>
			<li><svg><use href="#rec"/></svg><p>bandicam<br>2024-09-30<br>11-42-15-846.m<br>p4.bfix</p></li>
			<li><svg><use href="#paper"/></svg><p>get_fish.php</p></li>
			<li><svg><use href="#zip"/></svg><p>监听余额+提币(<br>需要使用我发布<br>的合约代码).zip</p></li>
			<li class="on"><svg><use href="#txt"/></svg><p>说明.txt</p></li>
		</ul>
	</div>
</section>

<div class="watermark"><small>www</small>.BANDICAM.<span>COM</span></div>

</body>
</html>
```
FILE: styles.css
```css
* {
	box-sizing: border-box;
}
body,
h2,
p,
ul {
	margin: 0;
	padding: 0;
}
ul {
	list-style: none;
}
a {
	color: inherit;
	text-decoration: none;
}
button {
	margin: 0;
	padding: 0;
	border: 0;
	background: none;
	color: inherit;
	font: inherit;
	display: flex;
	align-items: center;
	justify-content: center;
}
body {
	height: 100vh;
	overflow: hidden;
	position: relative;
	font: 9px/12px "Open Sans", "Noto Sans CJK SC", sans-serif;
	color: #555;
	background: #fff;
}
svg {
	flex: none;
	display: block;
}
.defs {
	position: absolute;
}
.i6 { width: 6px; height: 6px; }
.i8 { width: 8px; height: 8px; }
.i10 { width: 10px; height: 10px; }
.i12 { width: 12px; height: 12px; }
.i14 { width: 14px; height: 14px; }
.green {
	fill: #179237;
}

/* browser */
.browser {
	height: 100%;
	display: flex;
	flex-direction: column;
}
.tabs {
	flex: none;
	height: 24px;
	display: flex;
	background: #dedede;
	border-top: 1px solid #000;
}
.tab {
	flex: 0 1 156px;
	min-width: 0;
	display: flex;
	align-items: center;
	gap: 3px;
	padding: 0 7px 0 8px;
	color: #666;
	border-right: 1px solid #c6c6c6;
}
.tab.on {
	background: #fff;
	border-right: 0;
	color: #444;
}
.tab span {
	flex: 1;
	overflow: hidden;
	white-space: nowrap;
	-webkit-mask: linear-gradient(to right, #000 85%, transparent);
	mask: linear-gradient(to right, #000 85%, transparent);
}
.tab.on span,
.tab .full {
	-webkit-mask: none;
	mask: none;
}
.newTab {
	width: 26px;
}
.winBtns {
	flex: 1;
	display: flex;
	align-items: center;
	justify-content: flex-end;
	gap: 18px;
	color: #444;
}
.count {
	width: 11px;
	height: 11px;
	border: 1px solid #777;
	border-radius: 2px;
	font-size: 8px;
	line-height: 9px;
	text-align: center;
}
.winBtns .min {
	width: 13px;
	height: 1px;
	background: #777;
}
.bar {
	flex: none;
	height: 24px;
	display: flex;
	align-items: center;
	padding-left: 5px;
	gap: 11px;
	color: #444;
}
.bar .off {
	color: #bbb;
}
.url {
	flex: 1;
	height: 20px;
	margin-left: 5px;
	padding: 0 8px;
	display: flex;
	align-items: center;
	gap: 11px;
	background: #f2f2f2;
	font-size: 10px;
	color: #888;
}
.url p {
	flex: 1;
	margin-left: -4px;
}
.url b {
	font-weight: normal;
	color: #333;
}
.url del {
	color: #b5382c;
}
.ext {
	width: 80px;
	display: flex;
	gap: 10px;
	overflow: hidden;
}
.ext .cut {
	margin-left: 8px;
}
.marks {
	flex: none;
	height: 23px;
	display: flex;
	align-items: center;
	padding: 1px 0 0 3px;
	border-bottom: 1px solid #ccc;
	overflow: hidden;
}
.marks a {
	flex: none;
	width: 68px;
	display: flex;
	align-items: center;
	gap: 3px;
}
.marks span {
	width: 47px;
	overflow: hidden;
	white-space: nowrap;
}
.marks .w71 { width: 71px; }
.marks .w63 { width: 63px; }
.marks .w57 { width: 57px; }
.marks .w40 { width: 40px; }
.marks .fade {
	-webkit-mask: linear-gradient(to right, #000 60%, transparent);
	mask: linear-gradient(to right, #000 60%, transparent);
}

/* panel */
.panel {
	flex: 1;
	min-height: 0;
	display: flex;
}
.side {
	flex: none;
	width: 127px;
	display: flex;
	flex-direction: column;
	background: #3c444d;
	border-right: 1px solid #8a8f96;
	color: #d6d8da;
	font-size: 10px;
}
.host {
	flex: none;
	height: 37px;
	display: flex;
	align-items: center;
	gap: 5px;
	padding: 0 3px 0 8px;
	color: #fff;
	fill: #fff;
}
.host b {
	flex: 1;
	font-weight: 600;
}
.host em {
	width: 14px;
	height: 14px;
	border-radius: 2px;
	background: #fb7426;
	font-style: normal;
	font-weight: bold;
	line-height: 14px;
	text-align: center;
}
.menu {
	flex: 1;
	min-height: 0;
	overflow: hidden;
	background: #353d44;
	border-right: 5px solid #434c56;
}
.menu a {
	height: 32px;
	padding-left: 16px;
	display: flex;
	align-items: center;
	gap: 7px;
	white-space: nowrap;
}
.menu svg,
.sideFoot svg {
	fill: none;
	stroke: currentColor;
	color: #8d9399;
}
.menu .on {
	background: #2b3038;
	color: #fff;
}
.menu .on svg {
	color: #fff;
}
.menu .ad {
	height: 31px;
	color: #f8f227;
}
.sideFoot {
	flex: none;
	height: 20px;
	display: flex;
	justify-content: space-between;
	padding: 5px 15px 0 11px;
	overflow: hidden;
}
.sideFoot svg {
	color: #ccc;
}
.sideFoot .dim {
	color: #888;
}
.main {
	flex: 1;
	min-width: 0;
	display: flex;
	flex-direction: column;
	background: #f0f0f0;
}
.card {
	flex: 1;
	margin: 11px 0 12px 11px;
	padding: 12px 0 20px 11px;
	display: flex;
	flex-direction: column;
	overflow: hidden;
	background: #fff;
	border-radius: 2px;
}
.ftabs {
	display: flex;
	height: 21px;
	border-bottom: 1px solid #d8d8d8;
}
.ftabs > * {
	height: 21px;
	display: flex;
	align-items: center;
	gap: 5px;
	padding: 0 6px;
	border: 1px solid #d8d8d8;
	border-left: 0;
	background: #f0f0f0;
}
.ftabs .ftab:first-child {
	width: 81px;
	border-left: 1px solid #d8d8d8;
}
.ftabs .on {
	background: #fff;
	border-bottom-color: #fff;
	gap: 4px;
}
.ftab .i8 {
	margin-left: 2px;
}
.ftabs svg {
	color: #888;
}
.path {
	margin-top: 8px;
	height: 22px;
	display: flex;
	align-items: center;
	gap: 6px;
	border: 1px solid #dcdcdc;
	border-right: 0;
	white-space: nowrap;
	color: #666;
}
.path button {
	width: 27px;
	height: 20px;
	margin-right: -2px;
	border-right: 1px solid #dcdcdc;
}
.path label {
	margin-left: auto;
	margin-right: -6px;
	display: flex;
	align-items: center;
	gap: 3px;
	color: #888;
}
input[type="checkbox"] {
	appearance: none;
	width: 12px;
	height: 12px;
	margin: 0;
	display: block;
	border: 1px solid #dcdcdc;
	border-radius: 2px;
	background: #fff;
}
.tools {
	margin-top: 8px;
	padding-top: 8px;
	border-top: 1px solid #e2e2e2;
	display: flex;
	gap: 7px;
}
.tools button {
	height: 23px;
	padding: 0 8px;
	gap: 3px;
	border: 1px solid #dcdcdc;
	border-radius: 2px;
	white-space: nowrap;
}
.tools button + button {
	padding: 0 8px;
}
.tools svg {
	color: #999;
}
.tools .bin {
	margin-left: auto;
}
.tools .view {
	width: 24px;
	margin: 0 -17px 0 2px;
	border-color: #179237;
	background: #eef7f0;
}
.files {
	margin-top: 9px;
	border-collapse: collapse;
}
.files th {
	height: 25px;
	padding: 0;
	background: #f5f5f5;
	font-weight: normal;
	text-align: left;
}
.files td {
	height: 26px;
	padding: 0;
	border-bottom: 1px solid #eee;
}
.files .ck {
	width: 28px;
	padding-left: 7px;
}
.files svg {
	display: inline-block;
	vertical-align: middle;
}
.sort {
	width: 7px;
	height: 11px;
	margin-left: 8px;
}
.fi {
	width: 12px;
	height: 15px;
	margin: 0 6px 0 3px;
}
.sum {
	margin-top: auto;
	padding-left: 9px;
}
.sum a {
	margin-left: 7px;
	color: #179237;
}
.foot {
	flex: none;
	height: 20px;
	padding: 13px 0 0 209px;
	background: #fff;
	color: #179237;
	overflow: hidden;
}

/* windows */
.win {
	position: absolute;
	bottom: 0;
	display: flex;
	flex-direction: column;
	overflow: hidden;
	background: #fff;
	box-shadow: 0 0 6px rgba(0, 0, 0, .45);
}
.remote {
	left: 355px;
	right: 47px;
	top: 94px;
}
.remote header {
	flex: none;
	height: 32px;
	display: flex;
	align-items: center;
	gap: 20px;
	padding: 0 10px 0 7px;
	background: #179237;
	color: #fff;
}
.remote header svg {
	width: 12px;
	height: 12px;
}
.remote h2 {
	flex: 1;
	font: bold 12px/16px "Liberation Mono", "Noto Sans CJK SC", monospace;
}
.remote .min {
	width: 8px;
	height: 2px;
	margin-top: 4px;
	background: #fff;
}
.rbody {
	flex: 1;
	display: flex;
}
.rail {
	width: 28px;
	padding: 4px;
	border-right: 1px solid #f2f2f2;
}
.rail button {
	width: 20px;
	height: 20px;
	border-radius: 10px;
	background: #f4f4f4;
}
.servers {
	width: 177px;
	padding: 5px 6px;
	font-family: "Liberation Sans", "Noto Sans CJK SC", sans-serif;
}
.find {
	display: flex;
	align-items: center;
	gap: 4px;
	height: 24px;
	margin: 0 4px 5px;
	padding: 0 7px;
	border: 1px solid #ddd;
	border-radius: 12px;
	color: #bbb;
}
.find input {
	flex: 1;
	min-width: 0;
	padding: 0;
	border: 0;
	outline: none;
	font: inherit;
}
.find input::placeholder {
	color: #b4b4b8;
}
.servers ul {
	border-top: 1px solid #eee;
}
.servers li {
	height: 25px;
	display: flex;
	align-items: center;
	gap: 4px;
	padding-left: 9px;
	border-bottom: 1px solid #eee;
	color: #555;
}
.tux {
	width: 11px;
	height: 12px;
}
.add {
	width: 20px;
	height: 20px;
	margin: 7px auto;
	border-radius: 10px;
	background: #179237;
	color: #fff;
}
.term {
	flex: 1;
	background: #1c1c1c;
}

.notepad {
	left: 541px;
	top: 355px;
	width: 300px;
	border-left: 1px solid #aaa;
	color: #777;
}
.notepad header {
	flex: none;
	height: 21px;
	display: flex;
	align-items: center;
	gap: 2px;
	padding-left: 5px;
}
.notepad nav {
	flex: none;
	height: 15px;
	display: flex;
	align-items: center;
	gap: 9px;
	padding-left: 5px;
	border-bottom: 1px solid #eee;
}
.notepad textarea {
	flex: 1;
	margin: 0;
	padding: 0 2px;
	border: 0;
	outline: none;
	resize: none;
	overflow: hidden;
	color: #222;
	font: 11px/15px "Open Sans", "Noto Sans CJK SC", sans-serif;
}

.explorer {
	left: 678px;
	right: 0;
	top: 263px;
	color: #222;
}
.wf {
	width: 11px;
	height: 14px;
}
.explorer header {
	flex: none;
	height: 21px;
	display: flex;
	align-items: center;
	gap: 5px;
	padding-left: 6px;
}
.explorer header i {
	width: 1px;
	height: 8px;
	background: #999;
}
.ribbon {
	flex: none;
	height: 20px;
	display: flex;
	align-items: flex-start;
	padding-left: 1px;
	border-bottom: 1px solid #e4e4e4;
	color: #444;
}
.ribbon button {
	width: 38px;
	height: 17px;
}
.ribbon .on {
	width: 39px;
	background: #0461ba;
	color: #fff;
}
.addr {
	flex: none;
	height: 23px;
	display: flex;
	align-items: center;
	gap: 3px;
	padding-left: 5px;
	color: #555;
}
.addr button {
	width: 18px;
}
.addr .small {
	width: 12px;
}
.addr .off {
	color: #ccc;
}
.crumbs {
	flex: 1;
	height: 17px;
	display: flex;
	align-items: center;
	padding-left: 1px;
	border: 1px solid #ddd;
	border-right: 0;
	color: #222;
	overflow: hidden;
}
.crumbs .first {
	margin: 0 3px 0 4px;
}
.crumbs a {
	height: 15px;
	padding: 0 3px 0 2px;
	display: flex;
	align-items: center;
	gap: 5px;
	white-space: nowrap;
}
.crumbs .on {
	background: #e5f3ff;
}
.ebody {
	flex: 1;
	min-height: 0;
	display: flex;
}
.tree {
	flex: none;
	width: 113px;
	padding: 7px 1px 0;
	border-right: 1px solid #f0f0f0;
}
.tree li {
	height: 17px;
	display: flex;
	align-items: center;
	gap: 3px;
	padding-left: 22px;
}
.tree .top {
	padding-left: 17px;
	margin-top: 6px;
}
.tree .on {
	background: #d9d9d9;
}
.tree span {
	flex: 1;
	overflow: hidden;
	white-space: nowrap;
}
.tree .i8 {
	margin-right: 2px;
}
.tf {
	width: 12px;
	height: 14px;
}
.icons {
	flex: 1;
	display: flex;
	flex-wrap: wrap;
	align-content: flex-start;
	align-items: flex-start;
	gap: 3px;
	padding: 6px 0 0 11px;
}
.icons li {
	width: 74px;
	padding: 3px 2px 1px;
	border: 1px solid transparent;
	text-align: center;
	white-space: nowrap;
}
.icons svg {
	width: 64px;
	height: 64px;
	margin: 0 auto 2px;
}
.icons .on {
	background: #cce8ff;
	border-color: #99d1ff;
}

.watermark {
	position: absolute;
	left: 572px;
	top: 4px;
	font: bold 19px/22px "DejaVu Sans", sans-serif;
	color: #fff;
	white-space: nowrap;
	-webkit-text-stroke: 2px #555;
	paint-order: stroke fill;
	text-shadow: 0 0 3px #444;
}
.watermark small {
	font-size: 16px;
}
.watermark span {
	font-size: 14px;
}
```
